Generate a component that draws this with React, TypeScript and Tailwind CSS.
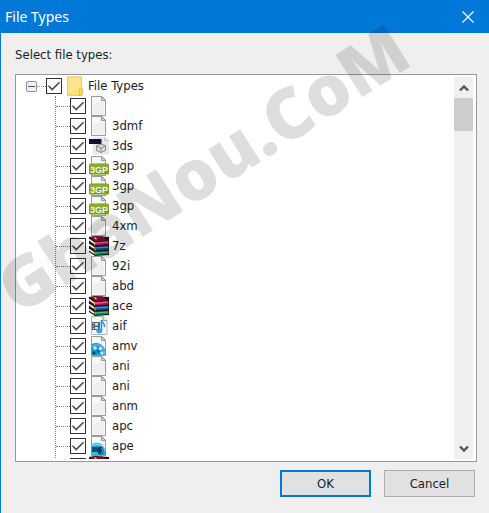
import { useRef, useState, type ReactNode } from "react";

type IconKind = "file" | "model" | "video3gp" | "archive" | "audio" | "reel" | "disc";

interface FileType {
  name: string;
  icon: IconKind;
}

const fileTypes: FileType[] = [
  { name: "", icon: "file" },
  { name: "3dmf", icon: "file" },
  { name: "3ds", icon: "model" },
  { name: "3gp", icon: "video3gp" },
  { name: "3gp", icon: "video3gp" },
  { name: "3gp", icon: "video3gp" },
  { name: "4xm", icon: "file" },
  { name: "7z", icon: "archive" },
  { name: "92i", icon: "file" },
  { name: "abd", icon: "file" },
  { name: "ace", icon: "archive" },
  { name: "aif", icon: "audio" },
  { name: "amv", icon: "reel" },
  { name: "ani", icon: "file" },
  { name: "ani", icon: "file" },
  { name: "anm", icon: "file" },
  { name: "apc", icon: "file" },
  { name: "ape", icon: "disc" },
  { name: "", icon: "archive" },
];

function Page() {
  return (
    <>
      <path d="M2.5.5h10.5l3.5 3.7v15.3h-14z" fill="#f7f7f7" stroke="#9b9b9b" />
      <path d="M4 18V9l9-4 2 1v12z" fill="#efefef" />
      <path d="M12.5.5v4h4z" fill="#d0d0d0" stroke="#8c8c8c" strokeWidth=".8" />
    </>
  );
}

function Books() {
  return (
    <>
      <path d="M0 1 6 0l14 1v18l-14 1-6-4z" fill="#1c1014" />
      <path d="M.5 1 13 .3 19 4.5 6 5.5z" fill="#7d0c2c" />
      <path d="M5 1.2h2v1h1v1H6z" fill="#e0b33a" />
      <path d="M5.5 6 19.5 5v3.6L6 9.4z" fill="#a51658" />
      <path d="M6 6.5 19 5.4v1.4L6 8z" fill="#e060a0" />
      <path d="M6 10.8 19.5 10v3.6L6 14.5z" fill="#164c92" />
      <path d="M7 11.3 19 10.5v1.2L7 12.6z" fill="#4b9ad8" />
      <path d="M6 15.8 19.5 15v3L6 19z" fill="#088a4c" />
      <path d="M7 16.3 19 15.5v1.2L7 17.6z" fill="#3fc180" />
      <path d="M0 3.5 5 7.2M0 8.5 5 12M0 13.5 5 17" stroke="#f2f2f2" strokeWidth="1.6" />
      <path d="M5.5 6v3.4M6 11v3.4M6 16v2.6" stroke="#e3c44b" />
    </>
  );
}

const iconArt: Record<IconKind, ReactNode> = {
  file: <Page />,
  model: (
    <>
      <path d="M4 1h13l3 3v14.5H4z" fill="#e9e9e9" />
      <path d="M15.5 1v3.5H20" fill="none" stroke="#c4c4c4" />
      <path d="M0 3h12.5v5H0z" fill="#04142b" />
      <path d="m12 8 4.5 1.7v4.8L12 16.5 7.5 14.5V9.7z" fill="#dcdcdc" stroke="#8b8b8b" />
      <path d="m7.5 10 4.5 2 4.5-2M12 12v4" fill="none" stroke="#8b8b8b" />
    </>
  ),
  video3gp: (
    <>
      <Page />
      <rect y="7.5" width="20" height="11" rx="1.5" fill="#7d9f1d" />
      <path d="M1 8.5h18v4H1z" fill="#8fae35" />
      <text
        x="10"
        y="16.5"
        textAnchor="middle"
        fontFamily="Liberation Sans, sans-serif"
        fontSize="9"
        fontWeight="bold"
        fill="#f8fbe8"
      >
        3GP
      </text>
    </>
  ),
  archive: <Books />,
  audio: (
    <>
      <path d="M2.5.5h11.5l4 4v14h-15.5z" fill="#f8f8f8" stroke="#b5b5b5" />
      <path d="M14 .5v4h4" fill="#e0e0e0" stroke="#9b9b9b" />
      <path d="M3 6h8v8H3z" fill="#52637a" />
      <path d="M4 7h1v1H4zm0 2.5h1v1H4zM4 12h1v1H4zm2-5h3v2.5H6zm0 4h3v2H6z" fill="#cfe4f5" />
      <path d="M12.5 4v10.5" stroke="#1d91db" strokeWidth="1.6" />
      <path d="M12.5 4c.5 3 4 3 2.8 7" fill="none" stroke="#1d91db" strokeWidth="1.4" />
      <ellipse cx="10.3" cy="15" rx="3" ry="2.3" fill="#2aa2ea" />
    </>
  ),
  reel: (
    <>
      <Page />
      <path d="M2.5 19V8.5C8 4.5 17 9 17 19z" fill="#1c97d2" />
      <path d="M3 10.5C9 6 15.5 11 15.8 18.5" fill="none" stroke="#6bd1f5" />
      <circle cx="6" cy="12" r="1.8" fill="#c0edfc" />
      <circle cx="11.5" cy="12.5" r="1.8" fill="#c0edfc" />
      <circle cx="5" cy="17" r="1.7" fill="#07517f" />
      <circle cx="9" cy="15.5" r="1.2" fill="#07517f" />
      <circle cx="13" cy="17" r="1.7" fill="#c0edfc" />
    </>
  ),
  disc: (
    <>
      <Page />
      <path d="M2.5 19V8.5C9 4 17 9 17 19z" fill="#20a7dd" />
      <path d="M3 9.5c5-3 11 0 12.5 5" fill="none" stroke="#8be1fa" strokeWidth="1.3" />
      <path d="M3 11h6v5H3z" fill="#075184" />
      <ellipse cx="11.5" cy="14.5" rx="3" ry="4" fill="#073c6b" />
      <path d="M12 12c2 1 2 4 0 5.5" fill="none" stroke="#4ecaf3" />
      <path d="M3 18c3-2 5-1 6 0" stroke="#75daf7" fill="none" />
    </>
  ),
};

function TypeIcon({ kind }: { kind: IconKind }) {
  return (
    <svg viewBox="0 0 20 20" className="size-5 shrink-0" aria-hidden="true">
      {iconArt[kind]}
    </svg>
  );
}

function FolderIcon() {
  return (
    <svg viewBox="0 0 16 20" className="h-5 w-4 shrink-0" aria-hidden="true">
      <path d="M.5.8h14v18.7H.5z" fill="#ffe07c" stroke="#f3cc5c" />
      <path d="M2 2h11v9L2 17z" fill="#ffe591" />
      <path d="M12.5 19.5v-6l1.5-2 1.5 1v6z" fill="#ffd965" stroke="#e9bb3e" strokeWidth=".8" />
    </svg>
  );
}

interface CheckboxProps {
  id: string;
  label: string;
  checked: boolean;
  onChange: () => void;
}

function Checkbox({ id, label, checked, onChange }: CheckboxProps) {
  return (
    <span className="grid size-4 shrink-0">
      <input
        id={id}
        type="checkbox"
        aria-label={label}
        checked={checked}
        onChange={onChange}
        className="col-start-1 row-start-1 size-4 appearance-none border border-[#333] bg-white"
      />
      {checked && (
        <svg viewBox="0 0 16 16" className="pointer-events-none col-start-1 row-start-1 size-4">
          <path d="m2.5 7.8 3.7 3.7L13.5 4.2" fill="none" stroke="#4a4a4a" strokeWidth="1.6" />
        </svg>
      )}
    </span>
  );
}

export default function App() {
  const listRef = useRef<HTMLDivElement>(null);
  const [expanded, setExpanded] = useState(true);
  const [checked, setChecked] = useState<boolean[]>(fileTypes.map(() => true));

  const allChecked = checked.every(Boolean);

  const toggleAll = () => setChecked(checked.map(() => !allChecked));

  const toggleOne = (index: number) => {
    setChecked(checked.map((value, i) => (i === index ? !value : value)));
  };

  const scrollList = (amount: number) => {
    listRef.current?.scrollBy({ top: amount });
  };

  return (
    <div className="relative flex h-screen flex-col overflow-hidden border-l border-[#0078d7] bg-[#efefef] font-['DejaVu_Sans_Condensed','DejaVu_Sans',sans-serif] text-[13px] leading-5 text-[#1c1c28]">
      <header className="flex h-[33px] shrink-0 items-center justify-between bg-[#0078d7] pr-[11px] pl-1 text-white">
        <h1 className="font-['Noto_Sans',sans-serif] text-sm">File Types</h1>
        <button type="button" aria-label="Close" className="p-1">
          <svg viewBox="0 0 12 12" className="size-3">
            <path d="m.5.5 11 11m0-11-11 11" stroke="#fff" strokeWidth="1.2" />
          </svg>
        </button>
      </header>

      <main className="flex min-h-0 flex-1 flex-col pt-3 pr-3 pb-4 pl-[14px]">
        <h2 className="mb-[9px]">Select file types:</h2>

        <section className="flex min-h-0 flex-1 border border-[#9699a3] bg-white pr-[3px] pb-[2px]">
          <div ref={listRef} className="min-w-0 flex-1 overflow-y-auto pt-px [scrollbar-width:none]">
            <div className="flex h-5 items-center pl-[10px]">
              <button
                type="button"
                aria-label={expanded ? "Collapse" : "Expand"}
                onClick={() => setExpanded(!expanded)}
                className="flex size-[11px] items-center justify-center rounded-xs border border-[#919191] bg-[#f1f1f1]"
              >
                <span className="h-px w-[7px] bg-[#36558f]" />
              </button>
              <span className="w-[9px] border-t border-dotted border-[#808080]" />
              <Checkbox id="all-types" label="File Types" checked={allChecked} onChange={toggleAll} />
              <span className="w-[5px]" />
              <FolderIcon />
              <label htmlFor="all-types" className="pl-[5px]">
                File Types
              </label>
            </div>

            {expanded && (
              <ul className="ml-[39px] border-l border-dotted border-[#808080]">
                {fileTypes.map((type, index) => (
                  <li key={index} className="flex h-5 items-center">
                    <span className="w-[14px] border-t border-dotted border-[#808080]" />
                    <Checkbox
                      id={`type-${index}`}
                      label={type.name || "No extension"}
                      checked={checked[index]}
                      onChange={() => toggleOne(index)}
                    />
                    <span className="w-[3px]" />
                    <TypeIcon kind={type.icon} />
                    <label htmlFor={`type-${index}`} className="pl-[3px]">
                      {type.name}
                    </label>
                  </li>
                ))}
              </ul>
            )}
          </div>

          <div className="mt-[2px] flex w-[19px] shrink-0 flex-col bg-[#f0f0f0]">
            <button
              type="button"
              aria-label="Scroll up"
              onClick={() => scrollList(-20)}
              className="flex h-[21px] items-center justify-center"
            >
              <svg viewBox="0 0 10 8" className="h-2 w-[10px]">
                <path d="m1 6.5 4-4 4 4" fill="none" stroke="#555" strokeWidth="2.4" />
              </svg>
            </button>
            <div className="h-[33px] bg-[#cdcdcd]" />
            <div className="flex-1" />
            <button
              type="button"
              aria-label="Scroll down"
              onClick={() => scrollList(20)}
              className="flex h-[21px] items-center justify-center"
            >
              <svg viewBox="0 0 10 8" className="h-2 w-[10px]">
                <path d="m1 1.5 4 4 4-4" fill="none" stroke="#555" strokeWidth="2.4" />
              </svg>
            </button>
          </div>
        </section>

        <footer className="mt-2 flex shrink-0 justify-end gap-[13px] pr-[2px]">
          <button type="button" className="h-[27px] w-[91px] border-2 border-[#0078d7] bg-[#e1e1e1]">
            OK
          </button>
          <button type="button" className="h-[27px] w-[91px] border border-[#adadad] bg-[#e1e1e1]">
            Cancel
          </button>
        </footer>
      </main>

      <div className="pointer-events-none absolute top-[264px] -left-4 origin-top-left -rotate-[32.5deg] font-['Open_Sans',sans-serif] text-[70px] leading-none font-extrabold whitespace-nowrap text-black/13">
        GhaNou.CoM
      </div>
    </div>
  );
}
